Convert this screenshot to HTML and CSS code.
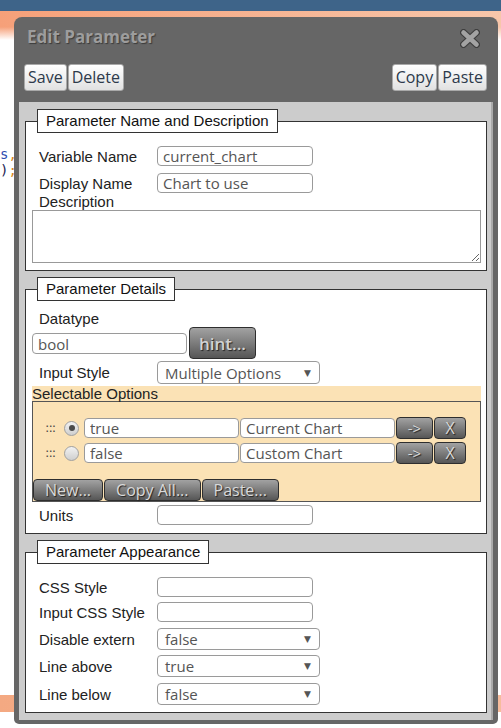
FILE: index.html
```html
<!DOCTYPE html>
<html>
<head>
<meta charset="utf-8">
<link rel="stylesheet" href="styles.css">
</head>
<body>
<div class="page">
  <div class="topbar"></div>
  <div class="band"></div>
  <div class="code">
    <div class="code-line"><span class="c-id">s</span><span class="c-op">,</span></div>
    <div class="code-line"><span class="c-p">)</span><span class="c-op">;</span></div>
  </div>
  <div class="stripe"></div>
</div>

<div class="dialog">
  <div class="titlebar">
    <span class="title">Edit Parameter</span>
    <svg class="close" width="20" height="19" viewBox="0 0 20 19">
      <g stroke-linecap="round">
        <line x1="3.5" y1="3.5" x2="16.5" y2="15.5" stroke="#3e3e3e" stroke-width="7"/>
        <line x1="16.5" y1="3.5" x2="3.5" y2="15.5" stroke="#3e3e3e" stroke-width="7"/>
        <line x1="3.5" y1="3.5" x2="16.5" y2="15.5" stroke="#a3a3a3" stroke-width="4.6"/>
        <line x1="16.5" y1="3.5" x2="3.5" y2="15.5" stroke="#a3a3a3" stroke-width="4.6"/>
      </g>
    </svg>
  </div>
  <div class="toolbar">
    <button class="btn-light">Save</button>
    <button class="btn-light">Delete</button>
    <span class="spacer"></span>
    <button class="btn-light">Copy</button>
    <button class="btn-light">Paste</button>
  </div>

  <div class="content">
    <div class="group g1">
      <div class="legend">Parameter Name and Description</div>
      <div class="row r-first">
        <label>Variable Name</label>
        <input class="field" type="text" value="current_chart">
      </div>
      <div class="row r-next">
        <label>Display Name</label>
        <input class="field" type="text" value="Chart to use">
      </div>
      <div class="plain-label desc-label">Description</div>
      <textarea class="desc"></textarea>
    </div>

    <div class="group g2">
      <div class="legend">Parameter Details</div>
      <div class="plain-label dt-label">Datatype</div>
      <div class="dt-row">
        <input class="field dt-field" type="text" value="bool">
        <button class="btn-dark hint">hint...</button>
      </div>
      <div class="row is-row">
        <label>Input Style</label>
        <div class="select"><span>Multiple Options</span><span class="arrow">&#9660;</span></div>
      </div>
      <div class="options">
        <div class="opt-head">Selectable Options</div>
        <div class="opt-box">
          <div class="opt-row">
            <span class="grip">:::</span>
            <span class="radio on"></span>
            <input class="field opt-field" type="text" value="true">
            <input class="field opt-field opt-label" type="text" value="Current Chart">
            <button class="btn-dark sm arrow-btn">-&gt;</button>
            <button class="btn-dark sm x-btn">X</button>
          </div>
          <div class="opt-row opt-row2">
            <span class="grip">:::</span>
            <span class="radio"></span>
            <input class="field opt-field" type="text" value="false">
            <input class="field opt-field opt-label" type="text" value="Custom Chart">
            <button class="btn-dark sm arrow-btn">-&gt;</button>
            <button class="btn-dark sm x-btn">X</button>
          </div>
          <div class="opt-actions">
            <button class="btn-dark act">New...</button>
            <button class="btn-dark act">Copy All...</button>
            <button class="btn-dark act">Paste...</button>
          </div>
        </div>
      </div>
      <div class="row units-row">
        <label>Units</label>
        <input class="field" type="text" value="">
      </div>
    </div>

    <div class="group g3">
      <div class="legend">Parameter Appearance</div>
      <div class="row r-first">
        <label>CSS Style</label>
        <input class="field" type="text" value="">
      </div>
      <div class="row r-gap5">
        <label>Input CSS Style</label>
        <input class="field" type="text" value="">
      </div>
      <div class="row r-gap6">
        <label>Disable extern</label>
        <div class="select sel22"><span>false</span><span class="arrow">&#9660;</span></div>
      </div>
      <div class="row r-gap5">
        <label>Line above</label>
        <div class="select sel22"><span>true</span><span class="arrow">&#9660;</span></div>
      </div>
      <div class="row r-gap6">
        <label>Line below</label>
        <div class="select sel22"><span>false</span><span class="arrow">&#9660;</span></div>
      </div>
    </div>
  </div>
</div>
</body>
</html>
```

FILE: styles.css
```css
html, body {
  margin: 0;
  padding: 0;
}
body {
  width: 501px;
  height: 728px;
  overflow: hidden;
  position: relative;
  background: #ffffff;
  font-family: "Liberation Sans", Arial, sans-serif;
}

/* background page */
.topbar {
  height: 11px;
  background: #3e6489;
}
.band {
  height: 29px;
  background:
    linear-gradient(to bottom, rgba(255,255,255,0) 55%, #ffffff 100%),
    linear-gradient(to right, #f6a079, #f7c6aa);
}
.code {
  margin-top: 106px;
  font: 14px/18px "DejaVu Sans Mono", monospace;
}
.code-line {
  height: 16px;
  overflow: hidden;
  line-height: 16px;
}
.c-id { color: #2d4db0; }
.c-op { color: #d98a22; }
.c-p { color: #1d2352; }
.stripe {
  margin-top: 517px;
  height: 17px;
  background: linear-gradient(to right, #f4a982, #f6bc9c);
}

/* dialog */
.dialog {
  position: absolute;
  left: 14px;
  top: 17px;
  width: 484px;
  height: 707px;
  background: #666666;
  border-radius: 8px 8px 5px 5px;
  display: flex;
  flex-direction: column;
}
.titlebar {
  height: 40px;
  display: flex;
  align-items: center;
  justify-content: space-between;
  padding: 0 18px 0 13px;
}
.title {
  font: bold 17px/20px "Open Sans", sans-serif;
  color: #9d9d9d;
  text-shadow: 1px 1px 1px #3c3c3c;
}
.close {
  display: block;
  margin-top: 2px;
}
.toolbar {
  margin-top: 7px;
  display: flex;
  gap: 1px;
  padding: 0 11px 0 10px;
}
.spacer { flex: 1; }
.btn-light {
  height: 27px;
  padding: 0 3px;
  margin: 0;
  font: 16px/25px "Open Sans", sans-serif;
  color: #2d3a4b;
  background: linear-gradient(#ffffff, #e1e1e1);
  border: 1px solid #a9a9a9;
  border-radius: 3px;
}

.content {
  margin: 11px 5px 4px 5px;
  flex: 1;
  background: #cccccc;
  padding: 0 6px;
  box-shadow: inset -2px 0 #aaaaaa;
}

.group {
  border: 1px solid #333333;
  background: #ffffff;
  display: flex;
  flex-direction: column;
  padding: 0 5px 0 6px;
}
.g1 { margin-top: 19px; padding-bottom: 7px; }
.g2 { margin-top: 18px; padding-bottom: 8px; }
.g3 { margin-top: 18px; padding-bottom: 7px; }

.legend {
  align-self: flex-start;
  margin: -13px 0 0 5px;
  border: 1px solid #333333;
  background: #ffffff;
  padding: 3px 8px;
  font-size: 15px;
  line-height: 16px;
  color: #111111;
}

.row {
  display: flex;
  align-items: center;
  padding-left: 7px;
}
.row label {
  width: 118px;
  flex: none;
  font-size: 15px;
  line-height: 17px;
  color: #222222;
}
.r-first { margin-top: 13px; }
.r-next { margin-top: 7px; }
.r-gap5 { margin-top: 5px; }
.r-gap6 { margin-top: 6px; }

.plain-label {
  padding-left: 7px;
  font-size: 15px;
  line-height: 16px;
  color: #222222;
}
.desc-label { margin-top: 1px; }

.field {
  box-sizing: border-box;
  width: 156px;
  height: 20px;
  margin: 0;
  border: 1px solid #9a9a9a;
  border-radius: 4px;
  padding: 0 5px;
  font: 15px "Open Sans", sans-serif;
  color: #555555;
  background: #ffffff;
  outline: none;
}
.desc {
  box-sizing: border-box;
  width: 449px;
  height: 53px;
  margin: 0;
  border: 1px solid #999999;
  border-radius: 0;
  display: block;
}

.dt-label { margin-top: 9px; line-height: 17px; }
.dt-row {
  height: 32px;
  display: flex;
  align-items: center;
  gap: 2px;
}
.dt-field { width: 155px; height: 21px; margin-top: 1px; }

.btn-dark {
  box-sizing: border-box;
  margin: 0;
  border: 1px solid #2e2e2e;
  border-radius: 4px;
  background: linear-gradient(#a2a2a2, #565656);
  color: #d9d9d9;
  text-shadow: 1px 1px 1px #222222;
  font: 16px "Open Sans", sans-serif;
  padding: 0;
}
.hint {
  width: 67px;
  height: 32px;
  font-size: 17px;
  font-weight: 600;
  color: #d2d2d2;
}

.is-row { margin-top: 2px; }
.select {
  box-sizing: border-box;
  width: 163px;
  height: 23px;
  border: 1px solid #9a9a9a;
  border-radius: 4px;
  padding: 0 8px 0 7px;
  display: flex;
  align-items: center;
  justify-content: space-between;
  font: 15px/20px "Open Sans", sans-serif;
  color: #555555;
}
.sel22 { height: 22px; }
.arrow {
  font: 9px/10px "DejaVu Sans", sans-serif;
  color: #555555;
}

.options {
  margin-top: 2px;
  width: 449px;
  background: #fbe2b5;
}
.opt-head {
  font-size: 15px;
  line-height: 15px;
  color: #222222;
}
.opt-box {
  border: 1px solid #555555;
  padding-top: 15px;
}
.opt-row {
  height: 22px;
  display: flex;
  align-items: center;
  padding-left: 12px;
}
.opt-row2 { margin-top: 3px; }
.grip {
  width: 12px;
  font: 13px/14px "DejaVu Sans", sans-serif;
  color: #4a4a4a;
  letter-spacing: -1px;
}
.radio {
  box-sizing: border-box;
  width: 15px;
  height: 15px;
  margin-left: 7px;
  border-radius: 50%;
  border: 1px solid #a0a0a0;
  background: linear-gradient(#f2f2f2, #cfcfcf);
  display: flex;
  align-items: center;
  justify-content: center;
}
.radio.on::after {
  content: "";
  width: 6px;
  height: 6px;
  border-radius: 50%;
  background: #4a4a4a;
}
.opt-field {
  width: 155px;
  margin-left: 5px;
}
.opt-label { margin-left: 1px; }
.sm {
  height: 22px;
  font-size: 16px;
  line-height: 20px;
}
.arrow-btn { width: 37px; margin-left: 1px; font-size: 15px; }
.x-btn { width: 32px; margin-left: 1px; }

.opt-actions {
  margin-top: 15px;
  display: flex;
  gap: 1px;
}
.act {
  height: 22px;
  padding: 0 11px;
  font-size: 16px;
  line-height: 20px;
}

.units-row { margin-top: 3px; }
```
